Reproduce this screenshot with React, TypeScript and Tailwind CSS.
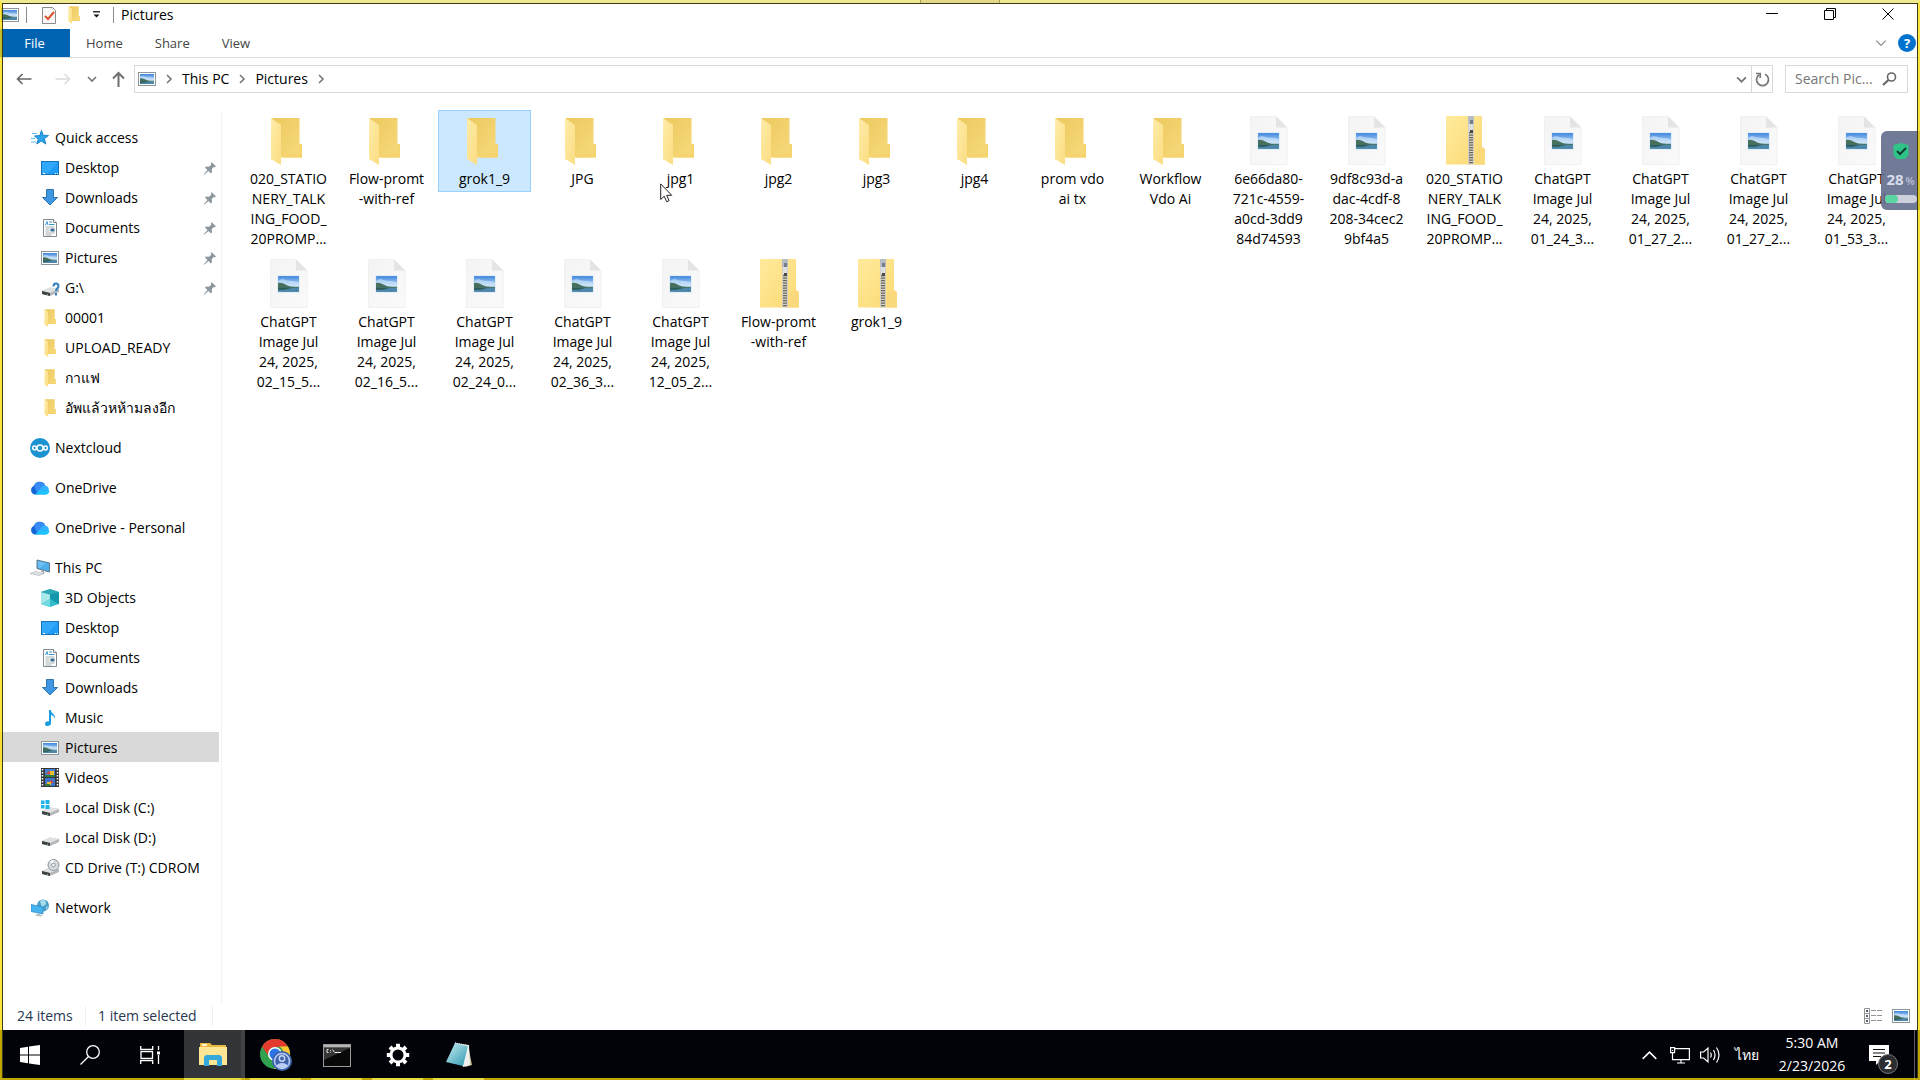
import { ReactNode, useState } from 'react';

type FileKind = 'folder' | 'image' | 'zip';

interface FileEntry {
  id: string;
  kind: FileKind;
  lines: string[];
}

interface TreeEntry {
  id: string;
  label: string;
  icon: ReactNode;
  pinned?: boolean;
}

interface TreeGroup extends TreeEntry {
  children?: TreeEntry[];
}

function Landscape() {
  return (
    <>
      <rect width="22" height="17" fill="#e4eefb" />
      <rect x="1" y="1" width="20" height="15" fill="url(#sky)" />
      <path d="M1 6c3-3 5-2 8-1s7 0 12 2v4H1z" fill="#d3e8fa" opacity=".6" />
      <path d="M1 7.500c3-.5 6 1 9 2.500s7 1 11 1v1.500H1z" fill="#47705a" />
      <path d="M1 12h20v4H1z" fill="#4c86a8" />
      <path d="M1 12h14l-8 2H1z" fill="#2f5a55" />
    </>
  );
}

function PictureIcon() {
  return (
    <svg width="18" height="14" viewBox="0 0 18 14">
      <rect x=".5" y=".5" width="17" height="13" fill="#fff" stroke="#8d969c" />
      <svg x="2" y="2" width="14" height="10" viewBox="1 1 20 15" preserveAspectRatio="none">
        <Landscape />
      </svg>
    </svg>
  );
}

function FolderShape() {
  return (
    <>
      <path d="M7 2h27.500v26H37v13.500H12z" fill="url(#folderBack)" />
      <path d="M34.500 28H37v13.500H17V39l17.500-2z" fill="#f5d470" />
      <path d="M6 2l10 7v40L6 43z" fill="url(#folderFront)" />
    </>
  );
}

function SmallFolder() {
  return (
    <svg width="12" height="18" viewBox="5 1 33 49" preserveAspectRatio="none">
      <FolderShape />
    </svg>
  );
}

function FileIcon({ kind }: { kind: FileKind }) {
  return (
    <svg width="48" height="50" viewBox="0 0 48 50" className="-mb-[2px]">
      {kind === 'folder' && <FolderShape />}
      {kind === 'image' && (
        <>
          <path d="M5.500.5h25.500l11 11V48.500H5.500z" fill="url(#paper)" stroke="#f0f0f0" />
          <path d="M31 .5l11 11H31z" fill="#e4e4e4" />
          <svg x="12" y="16" width="23" height="18" viewBox="0 0 22 17" preserveAspectRatio="none">
            <Landscape />
          </svg>
        </>
      )}
      {kind === 'zip' && (
        <>
          <path d="M5 0h36v31l3 2v15.500H5z" fill="url(#zipBody)" />
          <path d="M34 48.500V35l7-4 3 2v15.500z" fill="#f9d97c" />
          <path d="M27 0h6v48.500h-6z" fill="#d3cfc2" />
          <path d="M30 16v32" stroke="#6b6861" strokeWidth="4" strokeDasharray="1.300 1.200" />
          <rect x="27" y="0" width="6" height="8" rx="1" fill="#b6bcc4" />
          <rect x="29" y="4" width="3" height="4" fill="#767d86" />
          <rect x="28" y="8" width="4" height="7" fill="#dcdedf" />
          <rect x="29" y="14" width="3" height="3" fill="#4a4a48" />
        </>
      )}
    </svg>
  );
}

function DesktopIcon() {
  return (
    <svg width="18" height="14" viewBox="0 0 18 14">
      <rect x=".5" y=".5" width="17" height="13" fill="#1e9bf5" stroke="#1673b8" />
      <path d="M1 1h16L6 13H1z" fill="#3eb0ff" opacity=".6" />
      <path d="M2 12.500h2M14 12.500h1M16 12.500h1" stroke="#fff" />
    </svg>
  );
}

function DownloadIcon() {
  return (
    <svg width="18" height="17" viewBox="0 0 18 17">
      <path d="M5.500.5h7v8h4L9 16 1.500 8.500h4z" fill="#3f97e3" stroke="#2f74ad" />
    </svg>
  );
}

function DocumentIcon() {
  return (
    <svg width="18" height="18" viewBox="0 0 18 18">
      <path d="M2.500.5h10l3 3v14h-13z" fill="#fff" stroke="#80898f" />
      <path d="M12.500.5v3h3" fill="#fff" stroke="#80898f" />
      <path d="M4.500 6l1.500-3.500L7 6M8 3h3M8 5.500h5.500" stroke="#3795cc" fill="none" />
      <path d="M4.500 8h9M4.500 10h4M4.500 12h4M4.500 14h9M4.500 16h6" stroke="#a7b0b6" />
      <rect x="9.500" y="9.500" width="4" height="3" fill="#3b6d92" />
    </svg>
  );
}

function DriveShape() {
  return (
    <>
      <path d="M1 12l8-3.500 9 1.500v3l-9 4-8-2z" fill="#b4b7b9" />
      <path d="M1 12l8-3.500 9 1.500-9 4z" fill="#dfe1e2" />
      <path d="M1 12l8 2v3l-8-2z" fill="#3e4042" />
      <path d="M6.500 15v.8" stroke="#8fe38a" />
    </>
  );
}

function DriveIcon({ variant }: { variant?: 'windows' | 'cd' | 'unknown' }) {
  return (
    <svg width="19" height="18" viewBox="0 0 19 18">
      <DriveShape />
      {variant === 'windows' && <path d="M0 1.500h3.500V5H0zM4.500 1h4v4h-4zM0 6h3.500v3.500H0zM4.500 6h4v4h-4z" fill="#1eb4e8" />}
      {variant === 'cd' && (
        <>
          <circle cx="12.500" cy="6" r="5.500" fill="#d6dadd" stroke="#8f969b" />
          <path d="M12.500 6L9 2.500A5 5 0 0 1 12.500 1z" fill="#fff" />
          <circle cx="12.500" cy="6" r="1.800" fill="#fff" stroke="#8f969b" />
        </>
      )}
      {variant === 'unknown' && (
        <>
          <path d="M12.500 7.500c0-4 5-4 5-.5 0 2.500-2.500 2.500-2.500 5" fill="none" stroke="#2f7fc1" strokeWidth="2" />
          <rect x="14" y="14" width="2" height="2.500" fill="#2f7fc1" />
        </>
      )}
    </svg>
  );
}

function OneDriveIcon() {
  return (
    <svg width="20" height="14" viewBox="0 0 20 14">
      <path d="M4.500 13.500A4.500 4.500 0 0 1 3.800 5 6.300 6.300 0 0 1 14.500 2.800L9 13.500z" fill="#1567d8" />
      <path d="M5 3a6.300 6.300 0 0 1 10.500 1.800L8 12C5.500 9.500 4 6 5 3z" fill="#3a8cf5" />
      <path d="M6 13.500L11.500 6a4.800 4.800 0 0 1 4-1.200 4.500 4.500 0 0 1 0 8.700z" fill="#30b4ff" />
      <path d="M5 13.500l4-3.500h10.500a4.300 4.300 0 0 1-4 3.500z" fill="#1cc4fb" />
    </svg>
  );
}

const icons = {
  star: (
    <svg width="18" height="16" viewBox="0 0 18 16">
      <path d="M10.500.5l1.700 4.800 5.300.2-4.200 3.300 1.500 5.200-4.500-3-4.500 3 1.500-4.900L3.500 6l5.300-.5z" fill="#2ba3ea" stroke="#1c84c9" />
      <path d="M1 3.500h5M0 8.500h4M0 12h5" stroke="#59bdf2" />
    </svg>
  ),
  nextcloud: (
    <svg width="20" height="20" viewBox="0 0 20 20">
      <circle cx="10" cy="10" r="10" fill="#1b93d2" />
      <g fill="none" stroke="#fff" strokeWidth="1.500">
        <circle cx="10" cy="10" r="3" />
        <circle cx="4.500" cy="10" r="1.900" />
        <circle cx="15.500" cy="10" r="1.900" />
      </g>
    </svg>
  ),
  pc: (
    <svg width="20" height="18" viewBox="0 0 20 18">
      <path d="M7 1l12.500 3v9L7 9.500z" fill="#4fb0ea" stroke="#5f7585" />
      <path d="M8 2l8 2-6 5-2-.5z" fill="#6fc0f2" />
      <path d="M0 14.500l6-2 8 2-5 2z" fill="#dfe3e6" stroke="#a9b0b5" strokeWidth=".6" />
      <path d="M11 12l3 1-1 2" stroke="#8f999f" fill="none" />
    </svg>
  ),
  cube: (
    <svg width="18" height="18" viewBox="0 0 18 18">
      <path d="M0 3L9 0l9 3v12l-9 3-9-3z" fill="#35bccb" />
      <path d="M0 3l9 2.500V10l-9 5z" fill="#a9e9ec" />
      <path d="M0 3l9-3 9 3-9 2.500z" fill="#2fa9b5" />
      <path d="M18 3L9 5.500V10l9 5z" fill="#1597ac" />
      <path d="M0 15l9-5v8z" fill="#6fdae0" />
    </svg>
  ),
  music: (
    <svg width="18" height="18" viewBox="0 0 18 18">
      <path d="M8 1h2c0 4 5 4 4 9-.5-2.500-2-3.500-4-4v8.500c0 3-6 3.500-6 .5 0-2.500 2.500-3 4-2.500z" fill="#1a9ce0" />
    </svg>
  ),
  video: (
    <svg width="18" height="19" viewBox="0 0 18 19">
      <rect width="18" height="19" fill="#34373a" />
      <rect x="4" y="1" width="10" height="8" fill="#4a7fd0" />
      <rect x="4" y="10" width="10" height="8" fill="#3d76cf" />
      <path d="M5 6l3-3 2 3zM10 12l3 3h-5z" fill="#e6462f" />
      <path d="M9 3h4v4H9zM6 14h4v3H6z" fill="#f0be2d" />
      <path d="M4 7h10v2H4zM4 16h5v2H4z" fill="#327d3b" />
      <path d="M1.500 1v18M16.500 1v18" stroke="#fff" strokeWidth="1.500" strokeDasharray="1.500 1.500" />
    </svg>
  ),
  network: (
    <svg width="18" height="18" viewBox="0 0 18 18">
      <circle cx="12" cy="6.500" r="6" fill="#4b9fc9" />
      <path d="M9 2c3-2 6-1 6 2s-3 2-4 5zM15 8l2-1-2 5z" fill="#a7dcea" />
      <path d="M0 5.500l12 2.500v7L0 12.500z" fill="#45b3f0" stroke="#2c87bf" strokeWidth=".7" />
      <path d="M4 16.500l6 1 1-1-4-2z" fill="#b4babe" />
    </svg>
  ),
};

const tree: TreeGroup[] = [
  {
    id: 'quick',
    label: 'Quick access',
    icon: icons.star,
    children: [
      { id: 'q-desktop', label: 'Desktop', icon: <DesktopIcon />, pinned: true },
      { id: 'q-downloads', label: 'Downloads', icon: <DownloadIcon />, pinned: true },
      { id: 'q-documents', label: 'Documents', icon: <DocumentIcon />, pinned: true },
      { id: 'q-pictures', label: 'Pictures', icon: <PictureIcon />, pinned: true },
      { id: 'q-g', label: 'G:\\', icon: <DriveIcon variant="unknown" />, pinned: true },
      { id: 'q-00001', label: '00001', icon: <SmallFolder /> },
      { id: 'q-upload', label: 'UPLOAD_READY', icon: <SmallFolder /> },
      { id: 'q-coffee', label: 'กาแฟ', icon: <SmallFolder /> },
      { id: 'q-done', label: 'อัพแล้วหห้ามลงอีก', icon: <SmallFolder /> },
    ],
  },
  { id: 'nextcloud', label: 'Nextcloud', icon: icons.nextcloud },
  { id: 'onedrive', label: 'OneDrive', icon: <OneDriveIcon /> },
  { id: 'onedrive-personal', label: 'OneDrive - Personal', icon: <OneDriveIcon /> },
  {
    id: 'pc',
    label: 'This PC',
    icon: icons.pc,
    children: [
      { id: 'objects', label: '3D Objects', icon: icons.cube },
      { id: 'desktop', label: 'Desktop', icon: <DesktopIcon /> },
      { id: 'documents', label: 'Documents', icon: <DocumentIcon /> },
      { id: 'downloads', label: 'Downloads', icon: <DownloadIcon /> },
      { id: 'music', label: 'Music', icon: icons.music },
      { id: 'pictures', label: 'Pictures', icon: <PictureIcon /> },
      { id: 'videos', label: 'Videos', icon: icons.video },
      { id: 'c', label: 'Local Disk (C:)', icon: <DriveIcon variant="windows" /> },
      { id: 'd', label: 'Local Disk (D:)', icon: <DriveIcon /> },
      { id: 't', label: 'CD Drive (T:) CDROM', icon: <DriveIcon variant="cd" /> },
    ],
  },
  { id: 'network', label: 'Network', icon: icons.network },
];

const chat = (id: string, last: string): FileEntry => ({
  id,
  kind: 'image',
  lines: ['ChatGPT', 'Image Jul', '24, 2025,', last],
});

const files: FileEntry[] = [
  { id: 'f1', kind: 'folder', lines: ['020_STATIO', 'NERY_TALK', 'ING_FOOD_', '20PROMP...'] },
  { id: 'f2', kind: 'folder', lines: ['Flow-promt', '-with-ref'] },
  { id: 'grok', kind: 'folder', lines: ['grok1_9'] },
  { id: 'f4', kind: 'folder', lines: ['JPG'] },
  { id: 'f5', kind: 'folder', lines: ['jpg1'] },
  { id: 'f6', kind: 'folder', lines: ['jpg2'] },
  { id: 'f7', kind: 'folder', lines: ['jpg3'] },
  { id: 'f8', kind: 'folder', lines: ['jpg4'] },
  { id: 'f9', kind: 'folder', lines: ['prom vdo', 'ai tx'] },
  { id: 'f10', kind: 'folder', lines: ['Workflow', 'Vdo Ai'] },
  { id: 'i1', kind: 'image', lines: ['6e66da80-', '721c-4559-', 'a0cd-3dd9', '84d74593'] },
  { id: 'i2', kind: 'image', lines: ['9df8c93d-a', 'dac-4cdf-8', '208-34cec2', '9bf4a5'] },
  { id: 'z1', kind: 'zip', lines: ['020_STATIO', 'NERY_TALK', 'ING_FOOD_', '20PROMP...'] },
  chat('c1', '01_24_3...'),
  chat('c2', '01_27_2...'),
  chat('c3', '01_27_2...'),
  chat('c4', '01_53_3...'),
  chat('c5', '02_15_5...'),
  chat('c6', '02_16_5...'),
  chat('c7', '02_24_0...'),
  chat('c8', '02_36_3...'),
  chat('c9', '12_05_2...'),
  { id: 'z2', kind: 'zip', lines: ['Flow-promt', '-with-ref'] },
  { id: 'z3', kind: 'zip', lines: ['grok1_9'] },
];

function Chevron({ dir, size = 10, className }: { dir: 'right' | 'down' | 'up'; size?: number; className?: string }) {
  const d = { right: 'M3 1l4 4-4 4', down: 'M1 3l4 4 4-4', up: 'M1 7l4-4 4 4' }[dir];
  return (
    <svg width={size} height={size} viewBox="0 0 10 10" fill="none" stroke="currentColor" className={className}>
      <path d={d} strokeWidth={size > 11 ? 0.9 : 1.6} />
    </svg>
  );
}

function TreeRow({ entry, depth, active, onSelect }: { entry: TreeEntry; depth: number; active: boolean; onSelect: (id: string) => void }) {
  return (
    <button
      onClick={() => onSelect(entry.id)}
      className={`flex h-[30px] w-full items-center gap-[5px] pt-px pr-[2px] text-left ${depth ? 'pl-10' : 'pl-[30px]'} ${active ? 'bg-[#d9d9d9]' : 'hover:bg-[#e5f3ff]'}`}
    >
      <span className="flex w-5 shrink-0 justify-center">{entry.icon}</span>
      <span className="flex-1 whitespace-nowrap">{entry.label}</span>
      {entry.pinned && (
        <svg width="14" height="14" viewBox="0 0 14 14">
          <path d="M8.500 1L13 5.500l-1.500.8-.8-.2-2 2.200.3 3L8 12.500 5.500 10 1.500 13.500l-.7.200.2-.7L4.500 9 2 6.500l1-1 3 .2 2.200-2L8 2.500z" fill="#8c969d" />
        </svg>
      )}
    </button>
  );
}

function TitleBar() {
  return (
    <div className="flex h-[25px] items-start">
      <div className="flex items-center pt-px">
        <span className="ml-[1px]"><PictureIcon /></span>
        <span className="ml-[7px] h-4 w-px bg-[#8a8a8a]" />
        <button aria-label="Properties" className="ml-[15px]">
          <svg width="14" height="17" viewBox="0 0 14 17">
            <path d="M.5.500h10l3 3v13H.5z" fill="#f8f8f8" stroke="#8b8b8b" />
            <path d="M3 9l3 3 6-7" fill="none" stroke="#d8532c" strokeWidth="2" />
          </svg>
        </button>
        <button aria-label="New folder" className="ml-3"><SmallFolder /></button>
        <button aria-label="Customize Quick Access Toolbar" className="ml-3">
          <svg width="9" height="8" viewBox="0 0 9 8">
            <path d="M1 .8h7" stroke="#111" strokeWidth="1.300" />
            <path d="M1.500 3.500h6l-3 3z" fill="#111" />
          </svg>
        </button>
        <span className="ml-3 h-4 w-px bg-[#8a8a8a]" />
        <h1 className="ml-[7px]">Pictures</h1>
      </div>
      <div className="ml-auto flex pr-[3px]">
        <button aria-label="Minimize" className="flex h-5 w-[58px] items-center justify-center">
          <svg width="12" height="12"><path d="M0 5.500h12" stroke="#000" /></svg>
        </button>
        <button aria-label="Restore" className="flex h-5 w-[58px] items-center justify-center">
          <svg width="12" height="12" fill="none" stroke="#000"><path d="M.5 2.500h9v9h-9zM2.500 2.500v-2h9v9h-2" /></svg>
        </button>
        <button aria-label="Close" className="flex h-5 w-[58px] items-center justify-center">
          <svg width="12" height="12"><path d="M.5.5l11 11M11.500.5l-11 11" stroke="#000" /></svg>
        </button>
      </div>
    </div>
  );
}

function Ribbon() {
  return (
    <div className="flex h-[29px] items-center border-b border-[#dadbdc] text-[13px] text-[#444]">
      <button className="h-full w-[70px] bg-[#0063b1] pr-[1px] text-white">File</button>
      {['Home', 'Share', 'View'].map((tab) => (
        <button key={tab} className="h-full px-4">{tab}</button>
      ))}
      <button aria-label="Expand the Ribbon" className="mr-[11px] ml-auto">
        <Chevron dir="down" size={12} className="text-[#888]" />
      </button>
      <button aria-label="Help" className="mr-1 flex h-[18px] w-[18px] items-center justify-center rounded-full bg-[#0072ce] font-bold text-white">?</button>
    </div>
  );
}

function AddressBar() {
  return (
    <div className="flex items-center pt-[7px] pr-3 pl-1 text-[#777]">
      <button aria-label="Back" className="flex w-10 justify-center">
        <svg width="16" height="12" fill="none" stroke="#666" strokeWidth="1.600"><path d="M15.500 6H1.500M6.500 1l-5 5 5 5" /></svg>
      </button>
      <button aria-label="Forward" className="flex w-[38px] justify-center">
        <svg width="16" height="12" fill="none" stroke="#dcdcdc" strokeWidth="1.600"><path d="M.5 6h14M9.500 1l5 5-5 5" /></svg>
      </button>
      <button aria-label="Recent locations" className="flex w-5 justify-center"><Chevron dir="down" /></button>
      <button aria-label="Up" className="flex w-8 justify-center">
        <svg width="13" height="16" fill="none" stroke="#707070" strokeWidth="2"><path d="M6.500 16V2M1 7.500L6.500 2 12 7.500" /></svg>
      </button>
      <div className="flex h-7 flex-1 items-center border border-[#d9d9d9] bg-white">
        <span className="ml-[3px]"><PictureIcon /></span>
        <nav className="ml-2 flex items-center gap-2 text-black">
          <Chevron dir="right" className="text-[#777]" />
          <button>This PC</button>
          <Chevron dir="right" className="text-[#777]" />
          <button>Pictures</button>
          <Chevron dir="right" className="text-[#777]" />
        </nav>
        <button aria-label="Previous locations" className="mr-1 ml-auto"><Chevron dir="down" size={11} /></button>
        <button aria-label="Refresh" className="flex h-full w-[21px] items-center justify-center border-l border-[#d9d9d9]">
          <svg width="15" height="15" viewBox="0 0 15 15" fill="none" stroke="#777" strokeWidth="1.700">
            <path d="M10 2.200A6 6 0 1 1 4 2.800" />
            <path d="M1 1.500h4.200V6" />
          </svg>
        </button>
      </div>
      <label className="ml-3 flex h-7 w-[123px] items-center border border-[#d9d9d9] bg-white pl-[9px]">
        <input aria-label="Search Pictures" placeholder="Search Pic..." className="w-[82px] outline-none placeholder:text-[#767676]" />
        <svg width="15" height="14" viewBox="0 0 15 14" fill="none" stroke="#666" className="ml-[5px]">
          <circle cx="9.500" cy="5" r="4" strokeWidth="1.600" />
          <path d="M6.500 8L1 13" strokeWidth="2.200" />
        </svg>
      </label>
    </div>
  );
}

function StatusBar() {
  return (
    <div className="flex h-[27px] shrink-0 items-center pr-[10px] pb-[2px] pl-[17px] text-[#26374f]">
      <span className="w-[68px]">24 items</span>
      <span className="h-5 w-px bg-[#f0f0f0]" />
      <span className="w-[126px] pl-3">1 item selected</span>
      <span className="h-5 w-px bg-[#f0f0f0]" />
      <button aria-label="Details view" className="ml-auto">
        <svg width="18" height="16" viewBox="0 0 18 16" fill="none" stroke="#939393">
          <path d="M.5.5h5v15h-5zM.5 5.500h5M.5 10.500h5M7 2.500h5M13 2.500h5M7 7.500h5M13 7.500h5M7 12.500h5M13 12.500h5" />
          <path d="M2 3h2M2 8h2M2 13h2" stroke="#4d5f70" strokeWidth="2" />
        </svg>
      </button>
      <button aria-label="Large icons view" className="ml-[10px]"><PictureIcon /></button>
    </div>
  );
}

const taskApps = [
  {
    name: 'File Explorer',
    active: true,
    icon: (
      <svg width="28" height="24" viewBox="0 0 28 24">
        <path d="M1 0h10l2 2h14v5H1z" fill="#e9b93f" />
        <path d="M3 1h5v2H3z" fill="#fff6cf" />
        <path d="M0 4h28v18H0z" fill="#ffe694" />
        <path d="M5 23V14l2-2h14l2 2v9h-5v-6h-8v6z" fill="#35a8dc" />
      </svg>
    ),
  },
  {
    name: 'Google Chrome',
    icon: (
      <svg width="32" height="32" viewBox="0 0 32 32">
        <circle cx="15" cy="15" r="15" fill="#2fa14f" />
        <path d="M2 7.500A15 15 0 0 1 28 7.500L15 8a7 7 0 0 0-6.500 9z" fill="#e33b2e" />
        <path d="M28 7.500A15 15 0 0 1 14 30l7-11a7 7 0 0 0-2-11.500z" fill="#fdc92e" />
        <circle cx="15" cy="15" r="7" fill="#fff" />
        <circle cx="15" cy="15" r="5.500" fill="#2b74e8" />
        <circle cx="22" cy="22" r="10" fill="#3f62ad" />
        <circle cx="22" cy="22" r="7.500" fill="none" stroke="#b9cdf4" strokeWidth="1.500" />
        <circle cx="22" cy="19.500" r="2.700" fill="none" stroke="#c8d8f8" strokeWidth="1.500" />
        <path d="M16.500 27c1-4 10-4 11 0-3 3-8 3-11 0z" fill="#b9cdf4" />
      </svg>
    ),
  },
  {
    name: 'Command Prompt',
    icon: (
      <svg width="28" height="23" viewBox="0 0 28 23">
        <rect x=".5" y=".5" width="27" height="22" fill="#080808" stroke="#9b9b9b" />
        <path d="M1 1h26v2.500H1z" fill="#b5b5b5" />
        <path d="M1 4h26L1 16z" fill="#353535" />
        <path d="M5.500 5.500H4v3h1.500M7.500 6v.8M7.500 7.800v.8M9.500 5.500l2 3M12 8.500h6" stroke="#e8e8e8" fill="none" />
      </svg>
    ),
  },
  {
    name: 'Settings',
    icon: (
      <svg width="24" height="24" viewBox="0 0 24 24" fill="none" stroke="#fff">
        <circle cx="12" cy="12" r="7" strokeWidth="3" />
        <path d="M12 .8V4M12 20v3.200M.8 12H4M20 12h3.200M4 4l2.400 2.400M17.600 17.600L20 20M4 20l2.400-2.400M17.600 6.400L20 4" strokeWidth="4" />
      </svg>
    ),
  },
  {
    name: 'Notepad',
    icon: (
      <svg width="28" height="26" viewBox="0 0 28 26">
        <path d="M23 3l4 20-7 2z" fill="#c9bd98" />
        <path d="M10 1l14 2 1 20-7 2z" fill="#eef1ee" />
        <path d="M10 1l13 3-5 20L1 20z" fill="url(#note)" />
        <path d="M10 1l13 3" stroke="#d9e2e4" strokeWidth="1.500" strokeDasharray="1 1" />
      </svg>
    ),
  },
];

function Taskbar() {
  return (
    <footer className="flex h-[50px] shrink-0 bg-[#010308] text-white">
      <button aria-label="Start" className="flex w-[60px] items-center justify-center">
        <svg width="20" height="20" viewBox="0 0 20 20" fill="#fff"><path d="M0 3l8-1.200v7.700H0zM9 1.600L20 0v9.500H9zM0 10.500h8v7.700L0 17zM9 10.500h11V20L9 18.400z" /></svg>
      </button>
      <button aria-label="Search" className="flex w-[60px] items-center justify-center">
        <svg width="20" height="20" viewBox="0 0 20 20" fill="none" stroke="#fff" strokeWidth="1.300"><circle cx="13" cy="7" r="6.300" /><path d="M8.500 11.500L.5 19.500" /></svg>
      </button>
      <button aria-label="Task View" className="flex w-16 items-center justify-center pr-1">
        <svg width="20" height="20" viewBox="0 0 20 20" fill="none" stroke="#fff" strokeWidth="1.300">
          <path d="M.7 1v3.300h12V1M.7 19v-3.300h12V19M1 6.500h11.500v7H1zM18.500 1v4M18.500 10v9" />
          <path d="M17 6.500h3v3h-3z" fill="#fff" stroke="none" />
        </svg>
      </button>
      {taskApps.map((app) => (
        <button key={app.name} aria-label={app.name} className={`flex w-[61px] flex-col items-center ${app.active ? 'border-r-4 border-[#414244] bg-[#333538]' : ''}`}>
          <span className="flex flex-1 items-center pt-[2px]">{app.icon}</span>
          <span className={`h-[2px] bg-[#a5d8ff] ${app.active ? 'w-full' : 'w-[51px]'}`} />
        </button>
      ))}
      <div className="ml-auto flex items-center">
        <button aria-label="Show hidden icons" className="mr-3"><Chevron dir="up" size={17} /></button>
        <svg width="20" height="17" viewBox="0 0 20 17" fill="none" stroke="#fff" strokeWidth="1.200">
          <path d="M5 1.600h14.400v11H2.500V6M7 16h8M11 12.600V16" />
          <path d="M.6.6h4v5h-4zM2.600 3v1" />
        </svg>
        <svg width="20" height="18" viewBox="0 0 20 18" fill="none" stroke="#fff" strokeWidth="1.200" className="ml-[10px]">
          <path d="M.6 6h3L8 2v14l-4.400-4H.6zM10.500 6.500q1.500 2.500 0 5M13.500 4q3 5 0 10M16.500 1.500q5 7.500 0 15" />
        </svg>
        <button className="ml-[15px] w-6">ไทย</button>
        <button className="w-[106px] text-center">
          <span className="block h-[22px] leading-[20px]">5:30 AM</span>
          <span className="block h-[22px] leading-[22px]">2/23/2026</span>
        </button>
        <button aria-label="2 new notifications" className="relative mr-[25px] ml-1 flex">
          <svg width="20" height="20" viewBox="0 0 20 20">
            <path d="M0 0h20v16h-9l-4 4v-4H0z" fill="#fff" />
            <path d="M4 4.500h12M4 8h12M4 11.500h8" stroke="#111" />
          </svg>
          <span className="absolute top-[9px] left-[9px] flex h-5 w-5 items-center justify-center rounded-full border border-[#777] bg-[#2b2d30] text-[13px] font-bold">2</span>
        </button>
        <span className="mr-[5px] h-full w-px bg-[#5a5c60]" />
      </div>
    </footer>
  );
}

function ScreenOverlay() {
  return (
    <div className="pointer-events-none absolute inset-0 border-x-2 border-t-[3px] border-b-2 border-[#ffdd00]/75 border-t-[#efe98f]">
      <div className="h-full border border-b-0 border-[#3b3812]" />
      <div className="absolute -top-[3px] left-1/2 h-[3px] w-20 -translate-x-1/2 border-x border-[#a39c58] bg-[#e3d888]" />
    </div>
  );
}

export default function App() {
  const [place, setPlace] = useState('pictures');
  const [selected, setSelected] = useState('grok');

  return (
    <div className="relative flex h-screen flex-col overflow-hidden bg-white pt-1 font-['Open_Sans','Noto_Sans',sans-serif] text-[14px] leading-5 text-black">
      <svg width="0" height="0" className="absolute">
        <defs>
          <linearGradient id="sky" x1="0" y1="0" x2="0" y2="1">
            <stop offset="0" stopColor="#3f86dc" />
            <stop offset=".7" stopColor="#cfe8fb" />
          </linearGradient>
          <linearGradient id="folderBack" x1="0" y1="0" x2="1" y2="1">
            <stop offset="0" stopColor="#ecc95f" />
            <stop offset="1" stopColor="#f8da7c" />
          </linearGradient>
          <linearGradient id="folderFront" x1="0" y1="0" x2="1" y2="1">
            <stop offset="0" stopColor="#ffecab" />
            <stop offset="1" stopColor="#fbdd80" />
          </linearGradient>
          <linearGradient id="zipBody" x1="0" y1="0" x2="1" y2="1">
            <stop offset="0" stopColor="#ffea9c" />
            <stop offset="1" stopColor="#fbd973" />
          </linearGradient>
          <linearGradient id="paper" x1="0" y1="0" x2="1" y2="1">
            <stop offset="0" stopColor="#f4f4f4" />
            <stop offset="1" stopColor="#fafafa" />
          </linearGradient>
          <linearGradient id="note" x1="0" y1="0" x2="1" y2="1">
            <stop offset="0" stopColor="#c8eef5" />
            <stop offset="1" stopColor="#2d97ae" />
          </linearGradient>
        </defs>
      </svg>

      <header>
        <TitleBar />
        <Ribbon />
        <AddressBar />
      </header>

      <div className="flex min-h-0 flex-1 pt-[17px]">
        <aside className="w-[222px] shrink-0 border-r border-[#f3f3f3] pt-3 pr-[2px]">
          <div className="flex flex-col gap-[10px]">
            {tree.map((group) => (
              <div key={group.id}>
                <TreeRow entry={group} depth={0} active={place === group.id} onSelect={setPlace} />
                {group.children?.map((child) => (
                  <TreeRow key={child.id} entry={child} depth={1} active={place === child.id} onSelect={setPlace} />
                ))}
              </div>
            ))}
          </div>
        </aside>
        <main className="flex flex-1 flex-wrap content-start items-start gap-x-[5px] gap-y-[1px] pl-5">
          {files.map((file) => (
            <button
              key={file.id}
              onClick={() => setSelected(file.id)}
              className={`flex w-[93px] flex-col items-center border pt-[5px] pb-[2px] ${selected === file.id ? 'border-[#99d1ff] bg-[#cce8ff]' : 'border-transparent'}`}
            >
              <FileIcon kind={file.kind} />
              <span className="mt-[5px]">
                {file.lines.map((line) => (
                  <span key={line} className="block whitespace-nowrap">{line}</span>
                ))}
              </span>
            </button>
          ))}
        </main>
      </div>

      <StatusBar />
      <Taskbar />

      <div className="absolute top-[131px] right-0 flex h-[79px] w-[39px] flex-col items-center rounded-l-md bg-[#626c8c]/90 pt-3 text-[#d9dcec]">
        <svg width="16" height="18" viewBox="0 0 16 18">
          <path d="M8 0l7.500 2v10L12 16H4L.5 12V2z" fill="#2fc487" />
          <path d="M4 8l3 3 6-6" fill="none" stroke="#123c33" strokeWidth="2" />
        </svg>
        <div className="mt-2 flex items-baseline gap-[2px] text-[15px] font-bold">
          28<span className="text-[10px] opacity-60">%</span>
        </div>
        <div className="mt-1 h-2 w-8 rounded-full bg-[#cdd0dc]">
          <div className="h-full rounded-full bg-[#5cd6a0]" style={{ width: '42%' }} />
        </div>
      </div>

      <svg width="13" height="20" viewBox="0 0 13 20" className="pointer-events-none absolute top-[183px] left-[660px]">
        <path d="M.7.900v15.600l3.500-3.300 2.500 5.500 2.400-1-2.400-5.400h5z" fill="#fff" stroke="#222" />
      </svg>

      <ScreenOverlay />
    </div>
  );
}
